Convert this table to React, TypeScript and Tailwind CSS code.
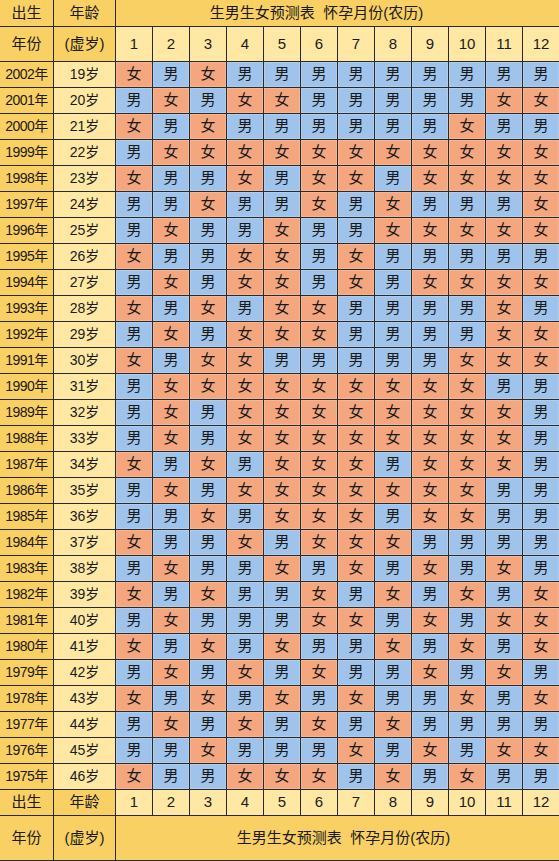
const B = '男'
const G = '女'

// 1 = 男, 0 = 女 ; months 1..12
const rows: [number, number, string][] = [
  [2002, 19, '010111111111'],
  [2001, 20, '101001111100'],
  [2000, 21, '010111111011'],
  [1999, 22, '100000000000'],
  [1998, 23, '011010010000'],
  [1997, 24, '110110101110'],
  [1996, 25, '101101100000'],
  [1995, 26, '011001011111'],
  [1994, 27, '101001010000'],
  [1993, 28, '010100111101'],
  [1992, 29, '101000111100'],
  [1991, 30, '010011111000'],
  [1990, 31, '100000000011'],
  [1989, 32, '101000000001'],
  [1988, 33, '101000000001'],
  [1987, 34, '010100010001'],
  [1986, 35, '101000000011'],
  [1985, 36, '110100010011'],
  [1984, 37, '011010001111'],
  [1983, 38, '101101010101'],
  [1982, 39, '010110101010'],
  [1981, 40, '101110010100'],
  [1980, 41, '010101101010'],
  [1979, 42, '101010110101'],
  [1978, 43, '010101011010'],
  [1977, 44, '101010101111'],
  [1976, 45, '110111010100'],
  [1975, 46, '011000101011'],
]

const months = [1, 2, 3, 4, 5, 6, 7, 8, 9, 10, 11, 12]

const font = { fontFamily: '"Liberation Sans", "Noto Sans CJK SC", sans-serif' }

const gold = 'bg-[#f9d063] flex items-center justify-center'
const light = 'bg-[#ffe8a3] flex items-center justify-center'

function MonthRow() {
  return (
    <>
      {months.map((m) => (
        <div key={m} className={`${light} text-[15px]`}>
          {m}
        </div>
      ))}
    </>
  )
}

export default function App() {
  return (
    <div
      className="w-[559px] h-[861px] bg-[#2a2a2a] text-[#1a1a1a] grid gap-px pb-px grid-cols-[53px_61px_repeat(12,36px)] grid-rows-[26px_34px_repeat(28,25px)_25px_44px]"
      style={font}
    >
      <div className={`${gold} text-[15px]`}>出生</div>
      <div className={`${gold} text-[15px]`}>年龄</div>
      <div className={`${gold} col-span-12 text-[15px] pr-[42px]`}>
        生男生女预测表&nbsp;&nbsp;怀孕月份(农历)
      </div>

      <div className={`${gold} text-[15px]`}>年份</div>
      <div className={`${gold} text-[15px]`}>(虚岁)</div>
      <MonthRow />

      {rows.map(([year, age, code]) => (
        <div key={year} className="contents">
          <div className={`${gold} text-[14px] tracking-[-0.5px]`}>{year}年</div>
          <div className={`${light} text-[14px]`}>{age}岁</div>
          {code.split('').map((c, i) => (
            <div
              key={i}
              className={`flex items-center justify-center text-[15px] shadow-[inset_0_0_0_1px_rgba(255,255,255,0.18)] ${
                c === '1' ? 'bg-[#9fc3ea]' : 'bg-[#f4a67f]'
              }`}
            >
              {c === '1' ? B : G}
            </div>
          ))}
        </div>
      ))}

      <div className={`${gold} text-[15px]`}>出生</div>
      <div className={`${gold} text-[15px]`}>年龄</div>
      <MonthRow />

      <div className={`${gold} text-[15px]`}>年份</div>
      <div className={`${gold} text-[15px]`}>(虚岁)</div>
      <div className={`${gold} col-span-12 text-[15px] pl-[12px]`}>
        生男生女预测表&nbsp;&nbsp;怀孕月份(农历)
      </div>
    </div>
  )
}
